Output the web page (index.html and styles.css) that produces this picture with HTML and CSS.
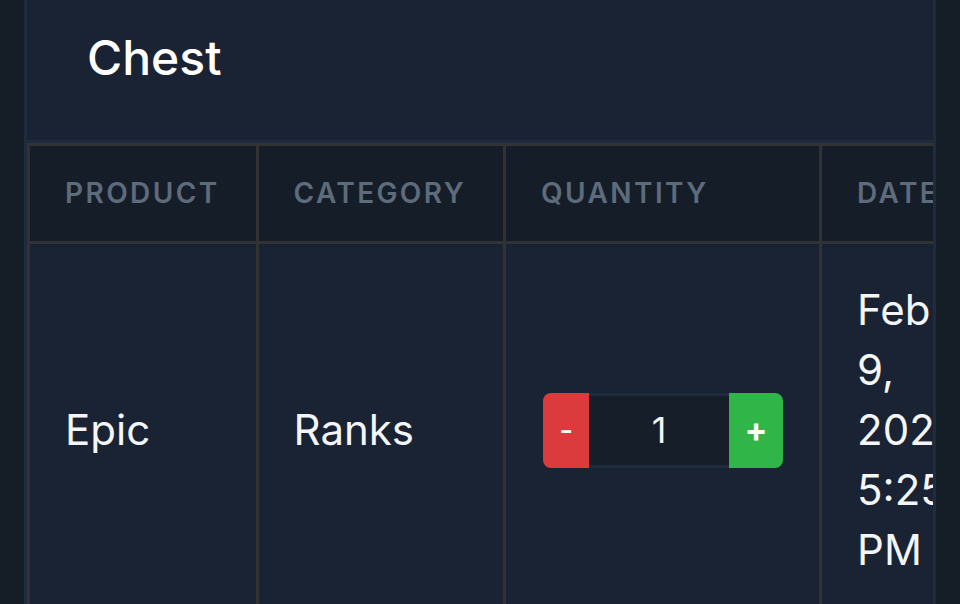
FILE: index.html
```html
<!DOCTYPE html>
<html lang="en">
<head>
<meta charset="utf-8">
<title>Chest</title>
<link rel="stylesheet" href="styles.css">
</head>
<body>
<main class="page">
  <section class="card">
    <header class="card-header">
      <h1 class="card-title">Chest</h1>
    </header>
    <div class="table-wrap">
      <table class="orders">
        <thead>
          <tr>
            <th>Product</th>
            <th class="cat-head">Category</th>
            <th>Quantity</th>
            <th>Date</th>
          </tr>
        </thead>
        <tbody>
          <tr>
            <td>Epic</td>
            <td>Ranks</td>
            <td class="qty-cell">
              <div class="qty">
                <button class="qty-btn qty-minus" type="button">-</button>
                <input class="qty-input" type="text" value="1">
                <button class="qty-btn qty-plus" type="button">+</button>
              </div>
            </td>
            <td><span class="date">Feb 9, 2025, 5:25 PM</span></td>
          </tr>
        </tbody>
      </table>
    </div>
  </section>
</main>
</body>
</html>
```
FILE: styles.css
```css
* { box-sizing: border-box; }

html, body {
  margin: 0;
  padding: 0;
  height: 100%;
}

body {
  background: #151d27;
  font-family: Inter, "Noto Sans", sans-serif;
  color: #f3f5f7;
  overflow: hidden;
}

.page {
  padding: 0 24px;
}

.card {
  background: #1a2333;
  border: 3px solid #1f2b3f;
  border-top: 0;
  overflow: hidden;
}

.card-header {
  padding: 28px 60px 52px;
  border-bottom: 3px solid #1f2b3f;
}

.card-title {
  margin: 0;
  font-size: 48px;
  line-height: 60px;
  font-weight: 500;
  color: #ffffff;
}

.table-wrap {
  overflow: hidden;
}

.orders {
  border-collapse: separate;
  border-spacing: 0;
  border-top: 3px solid #323232;
  border-left: 3px solid #323232;
}

.orders th,
.orders td {
  border-right: 3px solid #323232;
  border-bottom: 3px solid #323232;
  padding: 36px 36px 36px 35px;
  text-align: left;
}

.orders th {
  background: #151d29;
  color: #5e6b7b;
  font-size: 28px;
  line-height: 23px;
  font-weight: 600;
  letter-spacing: 2.4px;
  text-transform: uppercase;
  white-space: nowrap;
}

.orders th.cat-head {
  padding-right: 37px;
}

.orders td {
  font-size: 42px;
  line-height: 60px;
  font-weight: 400;
  color: #f3f5f7;
  vertical-align: middle;
}

.orders td.qty-cell {
  padding-left: 37px;
}

.date {
  display: block;
  width: min-content;
}

.qty {
  display: flex;
  width: 240px;
  height: 75px;
}

.qty-btn {
  border: 0;
  margin: 0;
  padding: 0;
  color: #ffffff;
  font-family: Inter, "Noto Sans", sans-serif;
  line-height: 1;
}

.qty-minus {
  width: 46px;
  background: #db3b3c;
  border-radius: 8px 0 0 8px;
  font-size: 30px;
  font-weight: 500;
}

.qty-plus {
  width: 54px;
  background: #2fb548;
  border-radius: 0 8px 8px 0;
  font-size: 34px;
  font-weight: 700;
}

.qty-input {
  width: 140px;
  margin: 0;
  padding: 0;
  border: 0;
  border-top: 3px solid #1f2b3f;
  border-bottom: 3px solid #1f2b3f;
  background: #161e2a;
  color: #f3f5f7;
  font-family: Inter, "Noto Sans", sans-serif;
  font-size: 36px;
  text-align: center;
  outline: none;
}
```
